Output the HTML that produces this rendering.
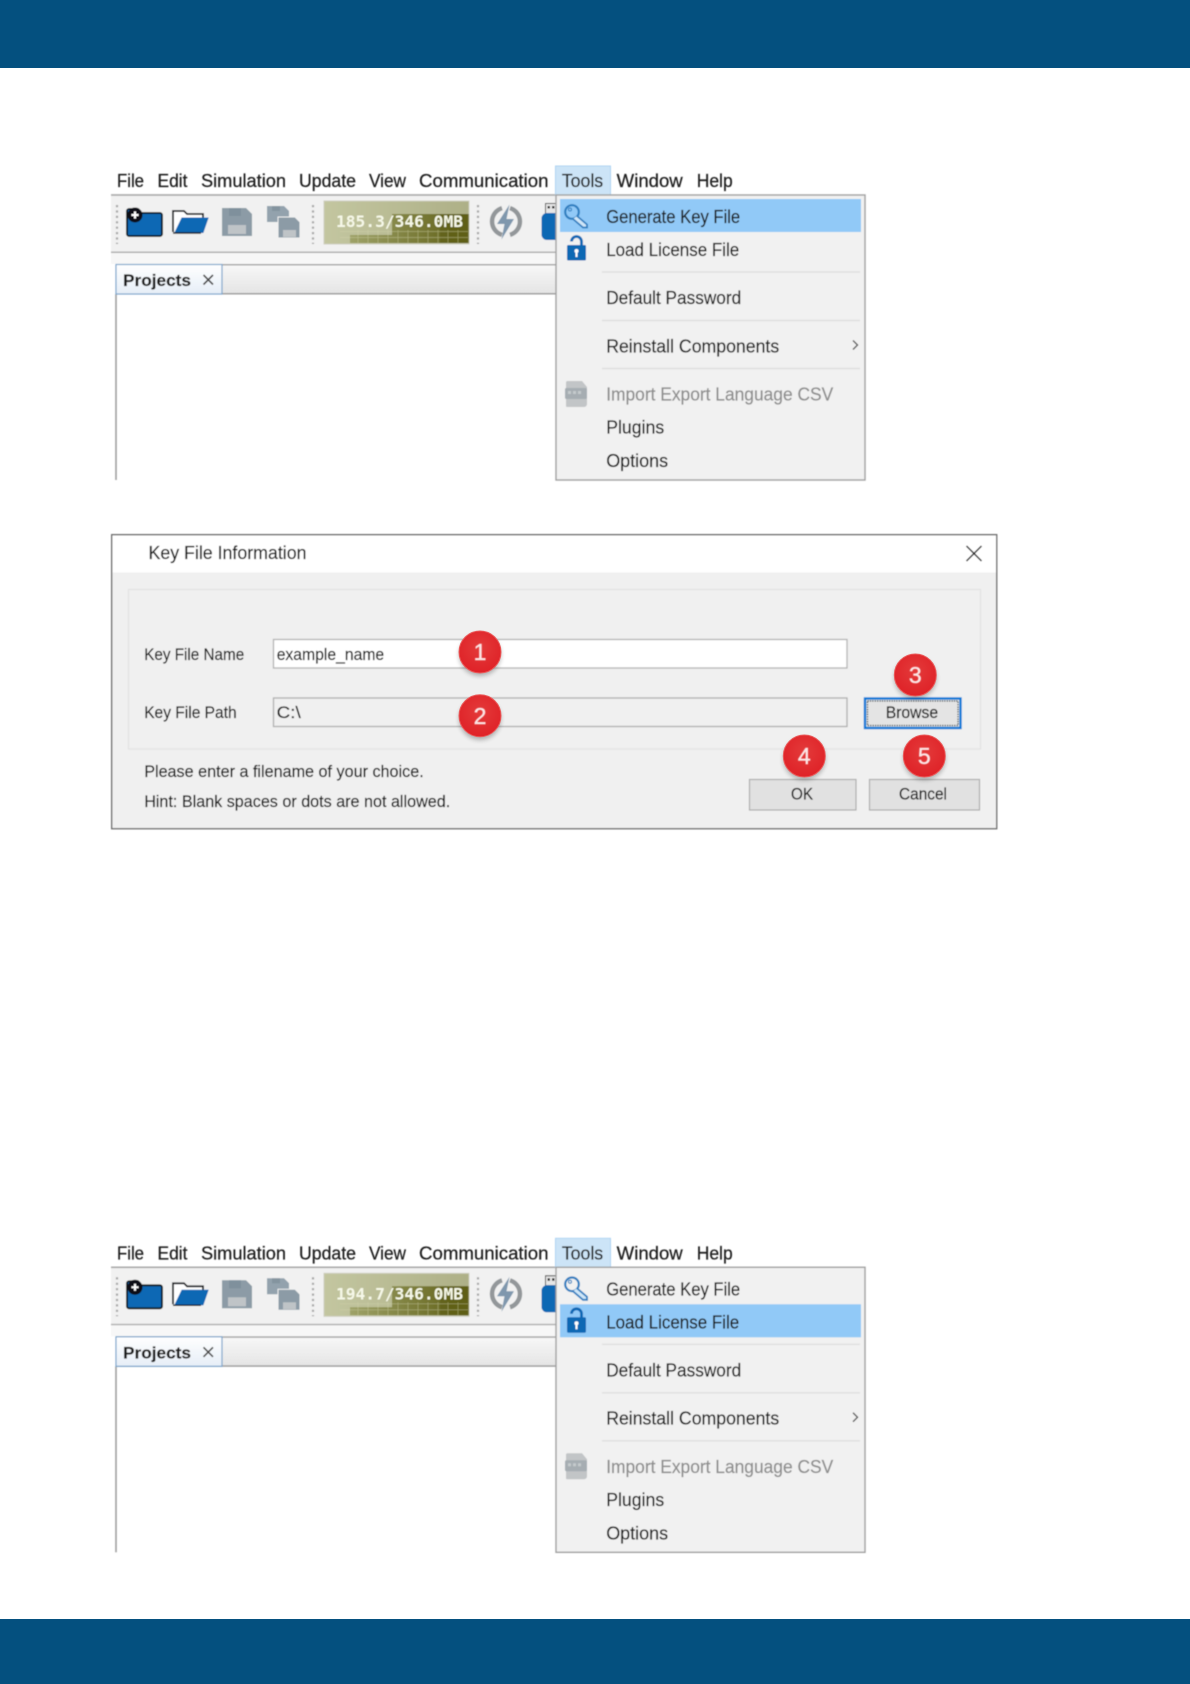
<!DOCTYPE html>
<html lang="en"><head><meta charset="utf-8"><title>Key File</title>
<style>
html,body{margin:0;padding:0;background:#fff}
svg{display:block}
text{font-family:"Liberation Sans",sans-serif;fill:#1c1c1c;stroke:#1c1c1c;stroke-width:.22;white-space:pre}
text.g{fill:#8e8e8e;stroke:#8e8e8e}
text.m{font-family:"DejaVu Sans Mono",monospace;fill:#f6f8e8;stroke:none}
text.n{fill:#fbe4e4;stroke:#fbe4e4;stroke-width:.5}
</style></head><body>
<svg xmlns="http://www.w3.org/2000/svg" width="1190" height="1684" viewBox="0 0 1190 1684">
<defs>
<filter id="b" x="-2%" y="-2%" width="104%" height="104%"><feGaussianBlur stdDeviation="0.5"/></filter>
<filter id="sh" x="-30%" y="-30%" width="160%" height="170%"><feGaussianBlur stdDeviation="2.5"/></filter>
<linearGradient id="strip" x1="0" y1="0" x2="0" y2="1"><stop offset="0" stop-color="#f8f8f8"/><stop offset="1" stop-color="#e4e4e4"/></linearGradient>
<linearGradient id="tab" x1="0" y1="0" x2="0" y2="1"><stop offset="0" stop-color="#ffffff"/><stop offset="1" stop-color="#e6eef7"/></linearGradient>
<linearGradient id="mem" x1="0" y1="0" x2="1" y2="0"><stop offset="0" stop-color="#c3c6a0"/><stop offset="1" stop-color="#aeb087"/></linearGradient>
<linearGradient id="memd" x1="0" y1="0" x2="1" y2="0"><stop offset="0" stop-color="#9ea268"/><stop offset="1" stop-color="#5e5e14"/></linearGradient>
<radialGradient id="red" cx="0.5" cy="0.4" r="0.65"><stop offset="0" stop-color="#e33a3a"/><stop offset="1" stop-color="#df2026"/></radialGradient>
<g id="toolbar">
  <rect x="111" y="195" width="445" height="58" fill="#f1f1f1"/>
  <rect x="111" y="194.200" width="445" height="1.600" fill="#a8a8a8"/>
  <rect x="111" y="251.500" width="445" height="1.600" fill="#b0b0b0"/>
  <rect x="111" y="253" width="445" height="11" fill="#f7f7f7"/>
  <path d="M117 205V244M313 205V244M478 205V244" stroke="#a8a8a8" stroke-width="2.200" stroke-dasharray="2.200 3.200" fill="none"/>
  <path d="M127 211a2 2 0 0 1 2-2h9l3 4h19a2 2 0 0 1 2 2v19a2 2 0 0 1-2 2h-31a2 2 0 0 1-2-2z" fill="#0a67b4" stroke="#101418" stroke-width="1.800"/>
  <circle cx="135" cy="215" r="7.500" fill="#0b0f14"/>
  <path d="M131.500 215h7M135 211.500v7" stroke="#fff" stroke-width="2"/>
  <path d="M173 232V211h11l3 3h16v5" fill="#fff" stroke="#1a1c20" stroke-width="1.800"/>
  <path d="M175 232.500h28l5-14.500h-26z" fill="#0a67b4" stroke="#0a67b4"/>
  <path d="M173 233h28" stroke="#1a1c20" stroke-width="1.500"/>
  <path d="M222 208h24l6 6v22h-30z" fill="#8c9ba6"/>
  <rect x="229" y="208" width="12" height="8" fill="#7f909c"/>
  <rect x="228" y="225" width="18" height="9" fill="#bfc4c7"/>
  <path d="M267 206h17l5 5v11h-22z" fill="#93a2ad"/>
  <path d="M278 217h17l5 5v16h-22z" fill="#8c9ba6" stroke="#f1f1f1"/>
  <rect x="283" y="230" width="13" height="7" fill="#bfc4c7"/>
  <rect x="272" y="206" width="8" height="5" fill="#84949f"/>
  <rect x="324" y="201" width="145" height="43" fill="url(#mem)" stroke="#cfcfc0"/>
  <path d="M392 214h76v29h-118v-8h42z" fill="url(#memd)"/>
  <path d="M440 214h29v29h-29z" fill="#5e5e14" opacity=".6"/>
  <path d="M340 231.500h128M340 237.500h128M358 230v13M368 230v13M378 230v13M388 230v13M398 230v13M408 230v13M418 230v13M428 230v13M438 230v13M448 230v13M458 230v13" stroke="#d6d8b0" stroke-width=".7" opacity=".5"/>
  <path d="M502 208.100A14 14 0 0 0 502 234.900M510 208.100A14 14 0 0 1 510 234.900" stroke="#93979a" stroke-width="4.500" fill="none"/>
  <path d="M509.500 204.500l-12.500 19.500h7.500l-3 15.500 12.500-20.500h-7.500z" fill="#7f97ad"/>
  <rect x="545.500" y="203.500" width="11" height="10" fill="#e6e6e6" stroke="#444"/>
  <path d="M547.500 206h2.500v2.500h-2.500zM552 206h2.500v2.500H552z" fill="#333"/>
  <path d="M556 213h-9a5.500 5.500 0 0 0-5.500 5.500v16a5.500 5.500 0 0 0 5.500 5.500h9z" fill="#0a67b4"/>
</g>
<g id="key"><circle cx="572" cy="212" r="6.800" fill="none" stroke="#2f7fc0" stroke-width="2.200"/><circle cx="570" cy="209.500" r="1.500" fill="none" stroke="#2f7fc0"/><path d="M577 216l10 8.500v3h-4l-10-8.500" fill="#cfe6f8" stroke="#2f7fc0" stroke-width="1.800"/></g>
<g id="lock"><path d="M571.500 241.500a5 5 0 0 1 10 0v4" fill="none" stroke="#0a67b4" stroke-width="2.800"/><rect x="567" y="245" width="19" height="15.500" rx="1.500" fill="#0a67b4"/><circle cx="576.500" cy="251" r="2" fill="#fff"/><rect x="575.500" y="251" width="2" height="6" fill="#fff"/></g>
<g id="csv"><path d="M567 381h15l5 6v17a3 3 0 0 1-3 3h-17a1 1 0 0 1-1-1v-24z" fill="#c2c5c7"/><rect x="565" y="388" width="22" height="11" rx="1.500" fill="#a6adb2"/><path d="M568 392.500h15" stroke="#c5cacc" stroke-width="3" stroke-dasharray="3 2"/></g>
</defs>
<rect x="0" y="0" width="1190" height="68" fill="#04507f"/>
<rect x="0" y="1619" width="1190" height="65" fill="#04507f"/>

<g filter="url(#b)">
  <g font-size="18">
    <text x="117" y="187" textLength="27" lengthAdjust="spacingAndGlyphs">File</text>
    <text x="157.500" y="187" textLength="30" lengthAdjust="spacingAndGlyphs">Edit</text>
    <text x="201" y="187" textLength="85" lengthAdjust="spacingAndGlyphs">Simulation</text>
    <text x="299" y="187" textLength="57" lengthAdjust="spacingAndGlyphs">Update</text>
    <text x="369" y="187" textLength="37" lengthAdjust="spacingAndGlyphs">View</text>
    <text x="419" y="187" textLength="129.500" lengthAdjust="spacingAndGlyphs">Communication</text>
    <text x="616.700" y="187" textLength="66" lengthAdjust="spacingAndGlyphs">Window</text>
    <text x="696.700" y="187" textLength="36" lengthAdjust="spacingAndGlyphs">Help</text>
  </g>
  <use href="#toolbar"/>
  <rect x="115.500" y="264" width="440.500" height="30" fill="url(#strip)"/>
  <rect x="115.500" y="264" width="440.500" height="1.500" fill="#a8a8a8"/>
  <rect x="115.500" y="293" width="440.500" height="1.500" fill="#a0a0a0"/>
  <rect x="115.200" y="294" width="1.600" height="186" fill="#a0a0a0"/>
  <rect x="116" y="264.500" width="106" height="29.500" fill="url(#tab)" stroke="#7ea6cc" stroke-width="1.200"/>
  <text x="123" y="286" font-size="17" font-weight="bold" textLength="68" lengthAdjust="spacingAndGlyphs">Projects</text>
  <path d="M203.500 275l9.500 9.500M213 275l-9.500 9.500" stroke="#444" stroke-width="1.600"/>
  <text class="m" x="336" y="227" font-size="16" font-weight="bold" textLength="127" lengthAdjust="spacingAndGlyphs">185.3/346.0MB</text>

  <rect x="555.500" y="166" width="55" height="29" fill="#cce4f7" stroke="#b0d4f2"/>
  <text x="561.700" y="187" font-size="18" textLength="41.500" lengthAdjust="spacingAndGlyphs">Tools</text>
  <rect x="556" y="195" width="309" height="285" fill="#f1f1f1" stroke="#a0a0a0" stroke-width="1.400"/>
  <rect x="560" y="199" width="301" height="33" fill="#91c9f7"/>
  <path d="M602 272h258M602 320.500h258M602 368.500h258" stroke="#dcdcdc" stroke-width="1.200"/>
  <use href="#key"/><use href="#lock"/><use href="#csv"/>
  <path d="M853 340.500l4.500 4.500-4.500 4.500" fill="none" stroke="#555" stroke-width="1.400"/>
  <g font-size="18">
    <text x="606.200" y="223" textLength="134" lengthAdjust="spacingAndGlyphs">Generate Key File</text>
    <text x="606.200" y="256" textLength="133" lengthAdjust="spacingAndGlyphs">Load License File</text>
    <text x="606.200" y="304" textLength="135" lengthAdjust="spacingAndGlyphs">Default Password</text>
    <text x="606.200" y="352.300" textLength="173" lengthAdjust="spacingAndGlyphs">Reinstall Components</text>
    <text class="g" x="606.200" y="400.700" textLength="227" lengthAdjust="spacingAndGlyphs">Import Export Language CSV</text>
    <text x="606.200" y="433.500" textLength="58" lengthAdjust="spacingAndGlyphs">Plugins</text>
    <text x="606.200" y="467" textLength="62" lengthAdjust="spacingAndGlyphs">Options</text>
  </g>
</g>

<g filter="url(#b)">
  <rect x="111.700" y="534.700" width="885" height="294" fill="#f0f0f0" stroke="#6e6e6e" stroke-width="1.400"/>
  <rect x="112.500" y="535.500" width="883.500" height="37" fill="#fff"/>
  <text x="148.500" y="559" font-size="18" textLength="158" lengthAdjust="spacingAndGlyphs">Key File Information</text>
  <path d="M966.500 546l15 15M981.500 546l-15 15" stroke="#222" stroke-width="1.500"/>
  <rect x="128.500" y="589.500" width="852" height="159.500" fill="none" stroke="#e2e2e2" stroke-width="1.200"/>
  <rect x="273.500" y="639.500" width="573.500" height="28.500" fill="#fff" stroke="#b4b4b4" stroke-width="1.300"/>
  <rect x="273.500" y="698" width="573.500" height="28.500" fill="#f0f0f0" stroke="#b0b0b0" stroke-width="1.300"/>
  <g font-size="16.500">
    <text x="144.200" y="660" textLength="100" lengthAdjust="spacingAndGlyphs">Key File Name</text>
    <text x="144.200" y="718" textLength="92.500" lengthAdjust="spacingAndGlyphs">Key File Path</text>
    <text x="276.700" y="660" textLength="107.500" lengthAdjust="spacingAndGlyphs">example_name</text>
    <text x="276.700" y="718" textLength="24" lengthAdjust="spacingAndGlyphs">C:\</text>
    <text x="144.200" y="777" textLength="279.500" lengthAdjust="spacingAndGlyphs">Please enter a filename of your choice.</text>
    <text x="144.200" y="807" textLength="306" lengthAdjust="spacingAndGlyphs">Hint: Blank spaces or dots are not allowed.</text>
  </g>
  <rect x="865" y="698.500" width="95.500" height="29.500" fill="#e4e4e4" stroke="#0078d7" stroke-width="2.400"/>
  <rect x="867.500" y="701" width="90.500" height="24.500" fill="none" stroke="#10202f" stroke-width="1.200" stroke-dasharray="1.200 1.200"/>
  <text x="885.700" y="718" font-size="16.500" textLength="52.500" lengthAdjust="spacingAndGlyphs">Browse</text>
  <rect x="749.500" y="779.500" width="106.500" height="30.500" fill="#e1e1e1" stroke="#adadad" stroke-width="1.200"/>
  <text x="791" y="799.500" font-size="16.500" textLength="22" lengthAdjust="spacingAndGlyphs">OK</text>
  <rect x="869.500" y="779.500" width="110" height="30.500" fill="#e1e1e1" stroke="#adadad" stroke-width="1.200"/>
  <text x="899" y="799.500" font-size="16.500" textLength="48" lengthAdjust="spacingAndGlyphs">Cancel</text>
</g>
<g>
  <g fill="#000" opacity=".28" filter="url(#sh)">
    <circle cx="480" cy="655" r="21"/><circle cx="480" cy="719" r="21"/><circle cx="915.300" cy="678" r="21"/><circle cx="804.300" cy="759" r="21"/><circle cx="924.300" cy="759" r="21"/>
  </g>
  <g fill="url(#red)" stroke="#ea5a5a" stroke-width="1">
    <circle cx="480" cy="652" r="21"/><circle cx="480" cy="715.700" r="21"/><circle cx="915.300" cy="675" r="21"/><circle cx="804.300" cy="756" r="21"/><circle cx="924.300" cy="756" r="21"/>
  </g>
  <g font-size="23" text-anchor="middle" filter="url(#b)">
    <text class="n" x="480" y="660">1</text>
    <text class="n" x="480" y="724">2</text>
    <text class="n" x="915.300" y="683">3</text>
    <text class="n" x="804.300" y="764">4</text>
    <text class="n" x="924.300" y="764">5</text>
  </g>
</g>

<g filter="url(#b)" transform="translate(0 1072.300)">
  <g font-size="18">
    <text x="117" y="187" textLength="27" lengthAdjust="spacingAndGlyphs">File</text>
    <text x="157.500" y="187" textLength="30" lengthAdjust="spacingAndGlyphs">Edit</text>
    <text x="201" y="187" textLength="85" lengthAdjust="spacingAndGlyphs">Simulation</text>
    <text x="299" y="187" textLength="57" lengthAdjust="spacingAndGlyphs">Update</text>
    <text x="369" y="187" textLength="37" lengthAdjust="spacingAndGlyphs">View</text>
    <text x="419" y="187" textLength="129.500" lengthAdjust="spacingAndGlyphs">Communication</text>
    <text x="616.700" y="187" textLength="66" lengthAdjust="spacingAndGlyphs">Window</text>
    <text x="696.700" y="187" textLength="36" lengthAdjust="spacingAndGlyphs">Help</text>
  </g>
  <use href="#toolbar"/>
  <rect x="115.500" y="264" width="440.500" height="30" fill="url(#strip)"/>
  <rect x="115.500" y="264" width="440.500" height="1.500" fill="#a8a8a8"/>
  <rect x="115.500" y="293" width="440.500" height="1.500" fill="#a0a0a0"/>
  <rect x="115.200" y="294" width="1.600" height="186" fill="#a0a0a0"/>
  <rect x="116" y="264.500" width="106" height="29.500" fill="url(#tab)" stroke="#7ea6cc" stroke-width="1.200"/>
  <text x="123" y="286" font-size="17" font-weight="bold" textLength="68" lengthAdjust="spacingAndGlyphs">Projects</text>
  <path d="M203.500 275l9.500 9.500M213 275l-9.500 9.500" stroke="#444" stroke-width="1.600"/>
  <text class="m" x="336" y="227" font-size="16" font-weight="bold" textLength="127" lengthAdjust="spacingAndGlyphs">194.7/346.0MB</text>

  <rect x="555.500" y="166" width="55" height="29" fill="#cce4f7" stroke="#b0d4f2"/>
  <text x="561.700" y="187" font-size="18" textLength="41.500" lengthAdjust="spacingAndGlyphs">Tools</text>
  <rect x="556" y="195" width="309" height="285" fill="#f1f1f1" stroke="#a0a0a0" stroke-width="1.400"/>
  <rect x="560" y="232" width="301" height="33" fill="#91c9f7"/>
  <path d="M602 272h258M602 320.500h258M602 368.500h258" stroke="#dcdcdc" stroke-width="1.200"/>
  <use href="#key"/><use href="#lock"/><use href="#csv"/>
  <path d="M853 340.500l4.500 4.500-4.500 4.500" fill="none" stroke="#555" stroke-width="1.400"/>
  <g font-size="18">
    <text x="606.200" y="223" textLength="134" lengthAdjust="spacingAndGlyphs">Generate Key File</text>
    <text x="606.200" y="256" textLength="133" lengthAdjust="spacingAndGlyphs">Load License File</text>
    <text x="606.200" y="304" textLength="135" lengthAdjust="spacingAndGlyphs">Default Password</text>
    <text x="606.200" y="352.300" textLength="173" lengthAdjust="spacingAndGlyphs">Reinstall Components</text>
    <text class="g" x="606.200" y="400.700" textLength="227" lengthAdjust="spacingAndGlyphs">Import Export Language CSV</text>
    <text x="606.200" y="433.500" textLength="58" lengthAdjust="spacingAndGlyphs">Plugins</text>
    <text x="606.200" y="467" textLength="62" lengthAdjust="spacingAndGlyphs">Options</text>
  </g>
</g>
</svg>
</body></html>
